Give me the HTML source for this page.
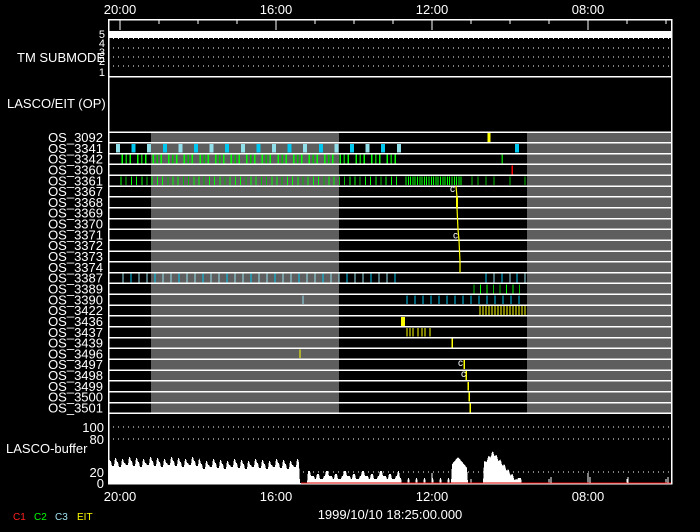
<!DOCTYPE html>
<html><head><meta charset="utf-8"><style>
html,body{margin:0;padding:0;background:#000;width:700px;height:532px;overflow:hidden}
svg{display:block}
text{font-family:"Liberation Sans",sans-serif;fill:#fff}
</style></head><body>
<svg id="s" width="700" height="532" viewBox="0 0 700 532" xmlns="http://www.w3.org/2000/svg" shape-rendering="crispEdges">
<rect width="700" height="532" fill="#000"/>
<g id="g"></g>
</svg>
<script>
var g=document.getElementById('g'),NS='http://www.w3.org/2000/svg';
function el(t,a,txt){var e=document.createElementNS(NS,t);for(var k in a)e.setAttribute(k,a[k]);if(txt!==undefined)e.textContent=txt;g.appendChild(e);return e;}
function R(x,y,w,h,c){el('rect',{x:x,y:y,width:w,height:h,fill:c});}
function V(x,y1,y2,c,w){el('line',{x1:x,x2:x,y1:y1,y2:y2,stroke:c,'stroke-width':w||1});}
function H(x1,x2,y,c,w,d){var a={x1:x1,x2:x2,y1:y,y2:y,stroke:c,'stroke-width':w||1};if(d)a['stroke-dasharray']=d;el('line',a);}
function T(x,y,s,fs,anc,c){var a={x:x,y:y,'font-size':fs||12,'shape-rendering':'auto'};if(anc)a['text-anchor']=anc;if(c)a.style='fill:'+c;el('text',a,s);}
var L=108,RR=671;
var top0=132,rh=10.82,bot=413;
R(151,top0,188,bot-top0,'#5e5e5e');R(527,top0,RR-527,bot-top0,'#5e5e5e');
el('rect',{x:L+0.5,y:19.5,width:RR-L,height:464,fill:'none',stroke:'#fff','stroke-width':1.5});
H(L,RR,76.5,'#fff',1.5);H(L,RR,132,'#fff',1.5);H(L,RR,bot,'#fff',1.5);
var x20=120,hp=39;
for(var h=0;h<15;h++){var x=x20+h*hp;if(x>RR)break;V(x,19,h%4==0?30:24,'#fff',1);}
for(var h=0;h<15;h++){var x=x20+h*hp;if(x>RR)break;V(x,484,h%4==0?473:479,'#fff',1);}
['20:00','16:00','12:00','08:00'].forEach(function(s,i){T(x20+i*156,14,s,13,'middle');T(x20+i*156,501,s,13,'middle');});
R(L,31,RR-L,7,'#fff');
[38.5,48,57,66].forEach(function(y){H(L,RR,y,'#fff',1,'1 4');});
T(105,38,'5',11,'end');T(105,47,'4',11,'end');T(105,56,'3',11,'end');T(105,65,'2',11,'end');T(105,76,'1',11,'end');
T(17,62,'TM SUBMODE',13);T(7,108,'LASCO/EIT (OP)',13);
var names=['3092','3341','3342','3360','3361','3367','3368','3369','3370','3371','3372','3373','3374','3387','3389','3390','3422','3436','3437','3439','3496','3497','3498','3499','3500','3501'];
function ry(i){return top0+i*rh;}
names.forEach(function(n,i){if(i>0)H(L,RR,ry(i),'#fff',1.5);T(103,ry(i)+10,'OS_'+n,13,'end');});
function bar(i,x,c,w){V(x,ry(i)+1,ry(i+1)-1,c,w||1);}
var CY='#00c8f0',LC='#90e0ec',GR='#00ff00',DG='#00c000',YL='#ffff00';
bar(0,489,YL,3);
var k=0;for(var x=118;x<402;x+=15.6){bar(1,x,k%2?CY:LC,4);k++;}bar(1,517,CY,4);
for(var x=122;x<396;x+=15.6){bar(2,x,GR,1.5);bar(2,x+4,DG,1.5);bar(2,x+8,GR,1.5);}bar(2,502,DG,1.5);
bar(3,512,'#ff0000',1.5);
for(var x=121;x<400;x+=5.2)bar(4,x,(Math.round(x)%3)?GR:DG,1);
for(var x=406;x<462;x+=2.3)bar(4,x,GR,1);
[472,478,486,494,510,525].forEach(function(x){bar(4,x,DG,1);});
el('polyline',{points:'456,'+ry(5)+' 457,'+ry(6)+' 457,'+ry(7)+' 458,'+ry(9)+' 459,'+ry(10)+' 460,'+ry(12)+' 460,'+ry(13),fill:'none',stroke:YL,'stroke-width':1.2,'shape-rendering':'auto'});
R(456,ry(6),2,rh,YL);
T(450,ry(5)+6,'c',10);T(453,ry(9)+9,'c',10);
k=0;for(var x=123;x<402;x+=8){bar(13,x,k%3==1?CY:LC,1);k++;}
[486,494,502,510,517,525].forEach(function(x){bar(13,x,k++%2?CY:LC,1);});
for(var x=474;x<526;x+=6.5)bar(14,x,(Math.round(x)%2)?GR:DG,1);
bar(15,303,LC,1);for(var x=407;x<524;x+=8)bar(15,x,(Math.round(x)%2)?CY:LC,1);
for(var x=480;x<527;x+=3)bar(16,x,YL,1.2);
R(401,ry(17)+1,4,rh-2,YL);
[407,410,413,418,422,425,430].forEach(function(x){bar(18,x,YL,1);});
bar(19,452,YL,1.5);bar(20,300,YL,1);
bar(21,464,YL,1.5);bar(22,466,YL,1.5);bar(23,468,YL,1.5);bar(24,469,YL,1.5);bar(25,470,YL,1.5);
T(458,ry(21)+7,'c',10);T(461,ry(22)+7,'c',10);
[427,439,472].forEach(function(y){H(L,RR,y,'#fff',1,'1 4');});
T(104,432,'100',13,'end');T(104,444,'80',13,'end');T(104,477,'20',13,'end');T(104,488,'0',13,'end');
T(6,453,'LASCO-buffer',13);
var pts='108,484 ';
function val(x){
 if(x<300){var p=(x-108)%7;var base=x<200?460:462;return base+ (p<2?-3:p<4?1:5)+ ((Math.floor(x/7))%3);}
 if(x<308)return 484;
 if(x<400){var p=(x-308)%9;return (p<3?471:476)+((Math.floor(x/9))%2)*3;}
 if(x<452){var p=(x-400)%8;return p<2?478:484;}
 if(x<468){return 457+Math.abs(x-458)*1.2;}
 if(x<484)return 484;
 if(x<518){return 451+Math.abs(x-493)*1.2+((x%4)<2?0:3);}
 if(x<522)return 478;
 return 484;}
for(var x=108;x<=527;x+=1)pts+=x+','+Math.min(484,val(x)).toFixed(1)+' ';
pts+='527,484';
el('polygon',{points:pts,fill:'#fff'});
H(301,RR,483,'#e00000',1);
[551,590,628,668].forEach(function(x){V(x,477,483,'#fff',1);});
T(390,519,'1999/10/10 18:25:00.000',13,'middle');
T(13,520,'C1',10,null,'#ff2020');T(34,520,'C2',10,null,'#00ff00');T(55,520,'C3',10,null,'#a0e0f0');T(77,520,'EIT',10,null,'#ffff00');
</script>
</body></html>
